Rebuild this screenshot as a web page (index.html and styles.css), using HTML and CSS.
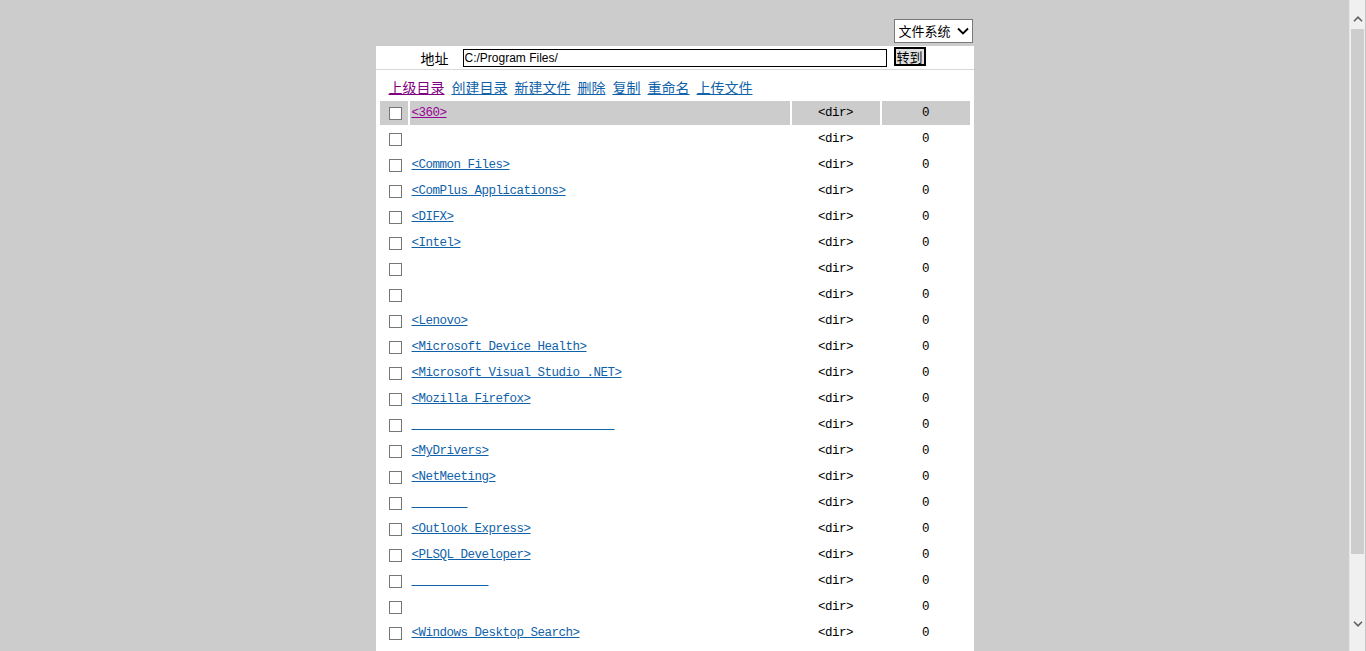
FILE: index.html
```html
<!DOCTYPE html>
<html lang="zh-CN">
<head>
<meta charset="utf-8">
<title>文件管理</title>
<link rel="stylesheet" href="styles.css">
</head>
<body>
<div class="wrap">
  <div class="topbar">
    <div class="select-box">
      <select class="fs-select"><option>文件系统</option><option>数据库</option></select>
      <svg class="chev" width="12" height="8" viewBox="0 0 12 8"><path d="M1 1.5 L6 6.5 L11 1.5" fill="none" stroke="#000" stroke-width="1.8"/></svg>
    </div>
  </div>
  <div class="panel">
    <div class="addr-row">
      <span class="addr-label">地址</span>
      <input class="addr-input" type="text" value="C:/Program Files/">
      <button class="go-btn">转到</button>
    </div>
    <div class="nav-row">
      <a href="#" class="nav visited">上级目录</a>
      <a href="#" class="nav">创建目录</a>
      <a href="#" class="nav">新建文件</a>
      <a href="#" class="nav">删除</a>
      <a href="#" class="nav">复制</a>
      <a href="#" class="nav">重命名</a>
      <a href="#" class="nav">上传文件</a>
    </div>
    <table class="files">
      <colgroup><col class="c-chk"><col class="c-name"><col class="c-dir"><col class="c-size"></colgroup>
      <tbody>
        <tr class="hl"><td class="chk"><input type="checkbox" class="cb"></td><td class="name"><a href="#" class="flink visited">&lt;360&gt;</a></td><td class="dir">&lt;dir&gt;</td><td class="size">0</td></tr>
        <tr><td class="chk"><input type="checkbox" class="cb"></td><td class="name"><a href="#" class="flink ghost">&lt;Alipay&gt;</a></td><td class="dir">&lt;dir&gt;</td><td class="size">0</td></tr>
        <tr><td class="chk"><input type="checkbox" class="cb"></td><td class="name"><a href="#" class="flink">&lt;Common Files&gt;</a></td><td class="dir">&lt;dir&gt;</td><td class="size">0</td></tr>
        <tr><td class="chk"><input type="checkbox" class="cb"></td><td class="name"><a href="#" class="flink">&lt;ComPlus Applications&gt;</a></td><td class="dir">&lt;dir&gt;</td><td class="size">0</td></tr>
        <tr><td class="chk"><input type="checkbox" class="cb"></td><td class="name"><a href="#" class="flink">&lt;DIFX&gt;</a></td><td class="dir">&lt;dir&gt;</td><td class="size">0</td></tr>
        <tr><td class="chk"><input type="checkbox" class="cb"></td><td class="name"><a href="#" class="flink">&lt;Intel&gt;</a></td><td class="dir">&lt;dir&gt;</td><td class="size">0</td></tr>
        <tr><td class="chk"><input type="checkbox" class="cb"></td><td class="name"><a href="#" class="flink ghost">&lt;Internet Explorer&gt;</a></td><td class="dir">&lt;dir&gt;</td><td class="size">0</td></tr>
        <tr><td class="chk"><input type="checkbox" class="cb"></td><td class="name"><a href="#" class="flink ghost">&lt;Java&gt;</a></td><td class="dir">&lt;dir&gt;</td><td class="size">0</td></tr>
        <tr><td class="chk"><input type="checkbox" class="cb"></td><td class="name"><a href="#" class="flink">&lt;Lenovo&gt;</a></td><td class="dir">&lt;dir&gt;</td><td class="size">0</td></tr>
        <tr><td class="chk"><input type="checkbox" class="cb"></td><td class="name"><a href="#" class="flink">&lt;Microsoft Device Health&gt;</a></td><td class="dir">&lt;dir&gt;</td><td class="size">0</td></tr>
        <tr><td class="chk"><input type="checkbox" class="cb"></td><td class="name"><a href="#" class="flink">&lt;Microsoft Visual Studio .NET&gt;</a></td><td class="dir">&lt;dir&gt;</td><td class="size">0</td></tr>
        <tr><td class="chk"><input type="checkbox" class="cb"></td><td class="name"><a href="#" class="flink">&lt;Mozilla Firefox&gt;</a></td><td class="dir">&lt;dir&gt;</td><td class="size">0</td></tr>
        <tr><td class="chk"><input type="checkbox" class="cb"></td><td class="name"><a href="#" class="flink ghost-ul">&lt;Mozilla Maintenance Service&gt;</a></td><td class="dir">&lt;dir&gt;</td><td class="size">0</td></tr>
        <tr><td class="chk"><input type="checkbox" class="cb"></td><td class="name"><a href="#" class="flink">&lt;MyDrivers&gt;</a></td><td class="dir">&lt;dir&gt;</td><td class="size">0</td></tr>
        <tr><td class="chk"><input type="checkbox" class="cb"></td><td class="name"><a href="#" class="flink">&lt;NetMeeting&gt;</a></td><td class="dir">&lt;dir&gt;</td><td class="size">0</td></tr>
        <tr><td class="chk"><input type="checkbox" class="cb"></td><td class="name"><a href="#" class="flink ghost-ul">&lt;Oracle&gt;</a></td><td class="dir">&lt;dir&gt;</td><td class="size">0</td></tr>
        <tr><td class="chk"><input type="checkbox" class="cb"></td><td class="name"><a href="#" class="flink">&lt;Outlook Express&gt;</a></td><td class="dir">&lt;dir&gt;</td><td class="size">0</td></tr>
        <tr><td class="chk"><input type="checkbox" class="cb"></td><td class="name"><a href="#" class="flink">&lt;PLSQL Developer&gt;</a></td><td class="dir">&lt;dir&gt;</td><td class="size">0</td></tr>
        <tr><td class="chk"><input type="checkbox" class="cb"></td><td class="name"><a href="#" class="flink ghost-ul">&lt;Uninstall&gt;</a></td><td class="dir">&lt;dir&gt;</td><td class="size">0</td></tr>
        <tr><td class="chk"><input type="checkbox" class="cb"></td><td class="name"><a href="#" class="flink ghost">&lt;Windows NT&gt;</a></td><td class="dir">&lt;dir&gt;</td><td class="size">0</td></tr>
        <tr><td class="chk"><input type="checkbox" class="cb"></td><td class="name"><a href="#" class="flink">&lt;Windows Desktop Search&gt;</a></td><td class="dir">&lt;dir&gt;</td><td class="size">0</td></tr>
      </tbody>
    </table>
  </div>
</div>
<div class="vscroll">
  <div class="sb-btn">
    <svg width="10" height="6" viewBox="0 0 10 6"><path d="M1 5.2 L5 1.2 L9 5.2" fill="none" stroke="#606060" stroke-width="1.6"/></svg>
  </div>
  <div class="sb-track">
    <div class="sb-thumb"></div>
  </div>
  <div class="sb-btn sb-down">
    <svg width="10" height="6" viewBox="0 0 10 6"><path d="M1 0.8 L5 4.8 L9 0.8" fill="none" stroke="#606060" stroke-width="1.6"/></svg>
  </div>
</div>
</body>
</html>
```
FILE: styles.css
```css
html, body {
  margin: 0;
  padding: 0;
}
body {
  background: #cccccc;
  font-family: "Noto Sans CJK SC", "Liberation Sans", sans-serif;
  font-size: 14px;
  color: #000;
  padding-right: 17px;
  overflow: hidden;
  height: 651px;
}

/* fake window scrollbar */
.vscroll {
  position: fixed;
  top: 0;
  right: 0;
  width: 17px;
  height: 651px;
  background: #f0f0f0;
  border-left: 1px solid #e6e6e6;
  border-right: 1px solid #c4c4c4;
  box-sizing: border-box;
  display: flex;
  flex-direction: column;
}
.sb-btn {
  height: 29px;
  display: flex;
  align-items: center;
  justify-content: center;
  padding-top: 8px;
  box-sizing: border-box;
}
.sb-down {
  height: 43px;
  padding-top: 0;
  align-items: flex-end;
  margin-top: auto;
  padding-bottom: 24px;
}
.sb-track {
  flex: 1;
  padding: 0 1px;
}
.sb-thumb {
  height: 525px;
  background: #cdcdcd;
}

.wrap {
  width: 598px;
  margin: 0 auto;
}
.topbar {
  display: flex;
  justify-content: flex-end;
  padding-top: 19px;
  padding-right: 1px;
  box-sizing: border-box;
  height: 46px;
}
.select-box {
  position: relative;
  width: 79px;
  height: 24px;
}
.fs-select {
  appearance: none;
  -webkit-appearance: none;
  width: 79px;
  height: 24px;
  border: 1px solid #7a7a7a;
  background: #fff;
  font-family: "Noto Sans CJK SC", sans-serif;
  font-size: 13px;
  padding: 0 0 0 4px;
  margin: 0;
  border-radius: 0;
  line-height: 22px;
  color: #000;
}
.chev {
  position: absolute;
  right: 4px;
  top: 8px;
  pointer-events: none;
}
.panel {
  background: #fff;
  padding-bottom: 20px;
}
.addr-row {
  display: flex;
  align-items: center;
  height: 23px;
  border-bottom: 1px solid #d8d8d8;
  padding-left: 45px;
}
.addr-label {
  font-size: 14px;
  line-height: 18px;
  width: 42px;
}
.addr-input {
  width: 424px;
  height: 18px;
  box-sizing: border-box;
  border: 1px solid #000;
  margin: 0;
  padding: 0 1px;
  font-family: "Liberation Sans", Arial, sans-serif;
  font-size: 12px;
  color: #000;
  outline: none;
}
.go-btn {
  margin-left: 7px;
  height: 19px;
  box-sizing: border-box;
  border: 2px solid #000;
  background: #e1e1e1;
  font-family: "Noto Sans CJK SC", sans-serif;
  font-size: 13px;
  line-height: 13px;
  padding: 0 1px;
  color: #000;
  border-radius: 0;
  margin-top: -2px;
}
.nav-row {
  display: flex;
  gap: 7px;
  height: 29px;
  box-sizing: border-box;
  padding: 7px 0 0 13px;
  line-height: 20px;
}
.nav {
  font-size: 14px;
  color: #0f62aa;
  text-decoration: underline;
}
.nav.visited {
  color: #800080;
}
.files {
  border-collapse: separate;
  border-spacing: 2px;
  width: 594px;
  margin-left: 2px;
  table-layout: fixed;
}
.c-chk { width: 28px; }
.c-name { width: 380px; }
.c-dir { width: 88px; }
.c-size { width: 88px; }
.files td {
  height: 24px;
  padding: 0;
  font-family: "Liberation Mono", "Noto Sans CJK SC", monospace;
  font-size: 12.5px;
  letter-spacing: -0.5px;
  vertical-align: middle;
  color: #000;
}
.files tr.hl td {
  background: #cccccc;
}
.chk {
  text-align: center;
}
.cb {
  appearance: none;
  -webkit-appearance: none;
  display: block;
  width: 13px;
  height: 13px;
  box-sizing: border-box;
  border: 1px solid #767676;
  background: #fff;
  margin: 1px 0 0 9px;
  border-radius: 0;
}
.name {
  padding-left: 2px !important;
  white-space: nowrap;
  overflow: hidden;
}
.flink {
  color: #0f62aa;
  text-decoration: underline;
}
.flink.visited {
  color: #990099;
}
.flink.ghost {
  color: transparent;
  text-decoration-color: transparent;
}
.flink.ghost-ul {
  color: transparent;
  text-decoration-color: #0f62aa;
}
.dir, .size {
  text-align: center;
}
```
